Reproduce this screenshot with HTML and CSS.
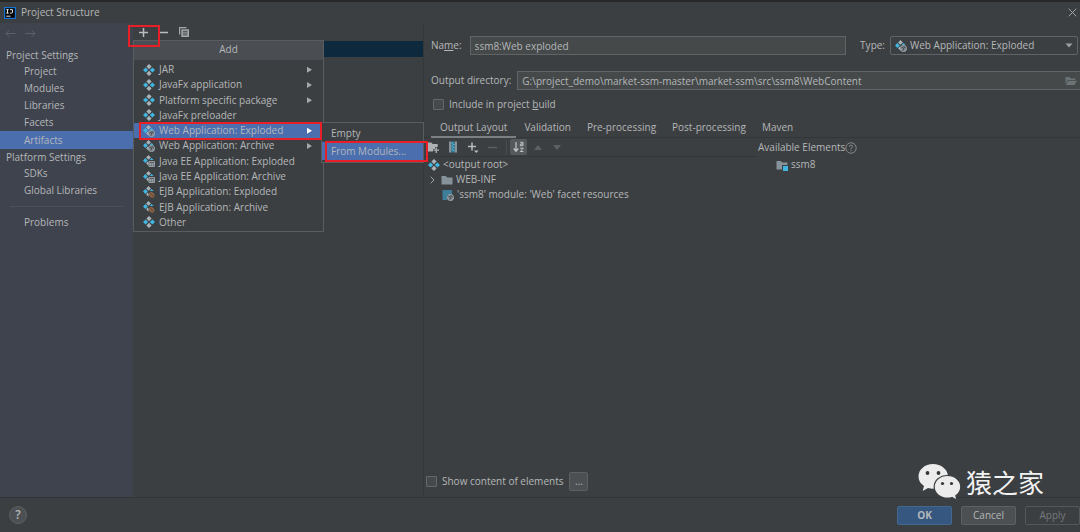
FILE: index.html
```html
<!DOCTYPE html>
<html lang="en">
<head>
<meta charset="utf-8">
<title>Project Structure</title>
<link rel="stylesheet" href="styles.css">
</head>
<body>
<svg class="defs" width="0" height="0" aria-hidden="true">
  <defs>
    <symbol id="artifact" viewBox="0 0 12 12">
      <path fill="#a9b3ba" d="M6 0l2.6 2.6L6 5.2 3.4 2.6zM6 6.8l2.6 2.6L6 12 3.4 9.4z"/>
      <path fill="#40b6e0" d="M2.6 3.4L5.2 6 2.6 8.6 0 6zM9.4 3.4L12 6 9.4 8.6 6.8 6z"/>
    </symbol>
    <symbol id="part" viewBox="0 0 12 12">
      <path fill="#a9b3ba" d="M5.5 0l2.4 2.4-2.4 2.4-2.4-2.4zM4.6 6.6l1 1v3.2L3.2 8.4z"/>
      <path fill="#40b6e0" d="M2.4 3.1l2.4 2.4-2.4 2.4L0 5.500zM8.600 3.100l2 2H6.600z"/>
    </symbol>
    <symbol id="globe" viewBox="0 0 12 12">
      <circle cx="8.500" cy="8.500" r="3.100" fill="#7d878d" stroke="#a9b3ba" stroke-width=".8"/>
      <path d="M6.300 7.200l2 .5.3 1.300-1 1.700M8.900 6l.5 1.300 1.500.5" fill="none" stroke="#3c3f41" stroke-width=".8"/>
    </symbol>
    <symbol id="web" viewBox="0 0 12 12"><use href="#part"/><use href="#globe"/></symbol>
    <symbol id="ee" viewBox="0 0 12 12"><use href="#part"/>
      <path d="M6 6.500h5.500v5H6zM6 8.200h5.500M7.800 8v3.500M9.700 8v3.500M6 9.900h5.500" fill="#3c3f41" stroke="#a9b3ba" stroke-width=".8"/>
    </symbol>
    <symbol id="ejb" viewBox="0 0 12 12"><use href="#part"/>
      <ellipse cx="8.700" cy="8.800" rx="2.400" ry="3.300" transform="rotate(-40 8.700 8.800)" fill="#8a6347"/>
      <path d="M6.700 6.500l1.900 2.100.5.4 1.700 2.200" stroke="#4c3a2e" stroke-width=".7" fill="none"/>
    </symbol>
    <symbol id="folder" viewBox="0 0 12 12"><path fill="#87939a" d="M.5 2h4.300l1.400 1.600h5.300V10.500H.5z"/></symbol>
  </defs>
</svg>
<div class="window">
  <div class="backdrop"></div>
  <header class="titlebar">
    <svg class="logo" viewBox="0 0 12 12"><rect width="12" height="12" fill="#1673d4"/><rect x="1.200" y="1.200" width="9.600" height="9.600" fill="#050505"/><path d="M2.300 2.700h2.400M3.500 2.700v3.400M2.300 6.100h2.400M6 2.700h2.500v2.400q0 1-1.100 1H6M2.300 9.200h4.200" stroke="#fff" stroke-width=".9" fill="none"/></svg>
    <h1 class="title">Project Structure</h1>
    <button class="icon-btn close" aria-label="Close"><svg width="9" height="9" viewBox="0 0 9 9"><path d="M.7.7l7.600 7.600M8.300.7L.7 8.300" stroke="#a2a5a7"/></svg></button>
  </header>

  <main class="main">
    <nav class="sidebar">
      <div class="history">
        <button class="icon-btn" aria-label="Back"><svg width="11" height="9" viewBox="0 0 11 9"><path d="M10.500 4.500H1M4.500 1L1 4.500 4.500 8" fill="none" stroke="#5d6064"/></svg></button>
        <button class="icon-btn" aria-label="Forward"><svg width="11" height="9" viewBox="0 0 11 9"><path d="M.5 4.500H10M6.500 1L10 4.500 6.500 8" fill="none" stroke="#5d6064"/></svg></button>
      </div>
      <h2 class="group">Project Settings</h2>
      <ul class="nav-list">
        <li><a href="#project">Project</a></li>
        <li><a href="#modules">Modules</a></li>
        <li><a href="#libraries">Libraries</a></li>
        <li><a href="#facets">Facets</a></li>
        <li><a class="current" href="#artifacts" aria-current="page">Artifacts</a></li>
      </ul>
      <h2 class="group">Platform Settings</h2>
      <ul class="nav-list">
        <li><a href="#sdks">SDKs</a></li>
        <li><a href="#global">Global Libraries</a></li>
      </ul>
      <hr class="rule">
      <ul class="nav-list">
        <li><a href="#problems">Problems</a></li>
      </ul>
    </nav>

    <section class="artifacts">
      <div class="list-tools">
        <button class="icon-btn" aria-label="Add"><svg width="9" height="9" viewBox="0 0 9 9"><path d="M4.500 0v9M0 4.500h9" stroke="#b9bcbe" stroke-width="1.500"/></svg></button>
        <button class="icon-btn" aria-label="Remove"><svg width="9" height="9" viewBox="0 0 9 9"><path d="M0 4.500h9" stroke="#b9bcbe" stroke-width="1.500"/></svg></button>
        <button class="icon-btn" aria-label="Copy"><svg width="10" height="10" viewBox="0 0 10 10"><path d="M.6 7.500V.6h6.900" fill="none" stroke="#a5a9ab" stroke-width="1.200"/><path fill="#a5a9ab" d="M2.300 2.300H10V10H2.300z"/><path d="M3.800 4.300h4.700M3.800 6.100h4.700M3.800 7.900h4.700" stroke="#3c3f41" stroke-width=".9"/></svg></button>
      </div>
      <div class="selected-row"></div>

      <div class="popup add-menu">
        <div class="popup-title">Add</div>
        <div class="menu" role="menu">
          <button class="item more" role="menuitem"><svg class="ic"><use href="#artifact"/></svg>JAR</button>
          <button class="item more" role="menuitem"><svg class="ic"><use href="#artifact"/></svg>JavaFx application</button>
          <button class="item more" role="menuitem"><svg class="ic"><use href="#artifact"/></svg>Platform specific package</button>
          <button class="item" role="menuitem"><svg class="ic"><use href="#artifact"/></svg>JavaFx preloader</button>
          <button class="item more active" role="menuitem"><svg class="ic"><use href="#web"/></svg>Web Application: Exploded</button>
          <button class="item more" role="menuitem"><svg class="ic"><use href="#web"/></svg>Web Application: Archive</button>
          <button class="item" role="menuitem"><svg class="ic"><use href="#ee"/></svg>Java EE Application: Exploded</button>
          <button class="item" role="menuitem"><svg class="ic"><use href="#ee"/></svg>Java EE Application: Archive</button>
          <button class="item" role="menuitem"><svg class="ic"><use href="#ejb"/></svg>EJB Application: Exploded</button>
          <button class="item" role="menuitem"><svg class="ic"><use href="#ejb"/></svg>EJB Application: Archive</button>
          <button class="item" role="menuitem"><svg class="ic"><use href="#artifact"/></svg>Other</button>
        </div>
      </div>
      <div class="popup submenu" role="menu">
        <button class="item" role="menuitem">Empty</button>
        <button class="item active" role="menuitem">From Modules...</button>
      </div>
      <div class="mark mark-add"></div>
      <div class="mark mark-web"></div>
      <div class="mark mark-modules"></div>
    </section>

    <section class="editor">
      <div class="row name-row">
        <label for="name">Na<u>m</u>e:</label>
        <input class="field" id="name" type="text" value="ssm8:Web exploded">
        <label class="type-label" for="type">Type:</label>
        <div class="combo">
          <svg class="ic"><use href="#web"/></svg>
          <select id="type"><option>Web Application: Exploded</option></select>
          <svg class="caret" viewBox="0 0 8 5"><path fill="#9da0a2" d="M.5.5h7L4 4.500z"/></svg>
        </div>
      </div>
      <div class="row dir-row">
        <label for="dir">Output directory:</label>
        <div class="browse">
          <input class="field" id="dir" type="text" value="G:\project_demo\market-ssm-master\market-ssm\src\ssm8\WebContent">
          <button class="icon-btn" aria-label="Browse"><svg width="12" height="10" viewBox="0 0 12 10"><path fill="#6c7376" d="M.5 1h4l1.300 1.500h4.500V4H2.800L.5 8zM3 4.800h8.800L9.600 9H.8z"/></svg></button>
        </div>
      </div>
      <label class="check include"><input type="checkbox"><span>Include in project <u>b</u>uild</span></label>

      <div class="tabs" role="tablist">
        <button class="tab on" role="tab" aria-selected="true">Output Layout</button>
        <button class="tab" role="tab">Validation</button>
        <button class="tab" role="tab">Pre-processing</button>
        <button class="tab" role="tab">Post-processing</button>
        <button class="tab" role="tab">Maven</button>
      </div>

      <div class="layout">
        <div class="output">
          <div class="tools">
            <button class="icon-btn" aria-label="New folder"><svg width="12" height="12" viewBox="0 0 12 12"><path fill="#aeb1b3" d="M0 1.500h4.300l1.400 1.600h5V6H8v2H6v2.500H0z"/><path d="M9.200 6.500V12M6.500 9.200H12" stroke="#aeb1b3" stroke-width="1.300"/></svg></button>
            <button class="icon-btn" aria-label="New archive"><svg width="10" height="12" viewBox="0 0 10 12"><path fill="#87939a" d="M1 .5h2.500v11H1zM6.500.5H9v11H6.500z"/><path fill="#327f9c" d="M3.500.5h3v11h-3z"/><path d="M3.500 2h1.500M5 3.500h1.500M3.500 5h1.500M5 6.500h1.500M3.500 8h1.500M5 9.500h1.500" stroke="#62bad8"/></svg></button>
            <button class="icon-btn" aria-label="Add copy of"><svg width="12" height="12" viewBox="0 0 12 12"><path d="M5 1.500v8M1 5.500h8" stroke="#b9bcbe" stroke-width="1.500"/><path fill="#b9bcbe" d="M7 9.500h4.500L9.300 12z"/></svg></button>
            <button class="icon-btn" aria-label="Remove"><svg width="9" height="9" viewBox="0 0 9 9"><path d="M0 4.500h9" stroke="#5e6163" stroke-width="1.300"/></svg></button>
            <span class="divider"></span>
            <button class="icon-btn sort" aria-label="Sort by name"><svg width="12" height="12" viewBox="0 0 12 12"><path d="M3 1v9M.7 7.500L3 10.200l2.300-2.700" stroke="#c3c6c8" stroke-width="1.200" fill="none"/><path d="M7.300 1.400H10v3.300H7.400V3H10M7.200 7.200h3L7.400 10.500h3" stroke="#c3c6c8" fill="none"/></svg></button>
            <button class="icon-btn" aria-label="Move up"><svg width="8" height="5" viewBox="0 0 8 5"><path fill="#5e6163" d="M0 5h8L4 0z"/></svg></button>
            <button class="icon-btn down" aria-label="Move down"><svg width="8" height="5" viewBox="0 0 8 5"><path fill="#5e6163" d="M0 0h8L4 5z"/></svg></button>
          </div>
          <ul class="tree">
            <li><svg class="ic"><use href="#artifact"/></svg>&lt;output root&gt;</li>
            <li><svg class="chevron" viewBox="0 0 5 8"><path d="M.7.7L4 4 .7 7.300" fill="none" stroke="#a0a3a5"/></svg><svg class="ic"><use href="#folder"/></svg>WEB-INF</li>
            <li class="leaf"><svg class="ic" viewBox="0 0 12 12"><path fill="#3d7f9b" d="M.5 1h9.500v4.500L5 6.500V11H.5z"/><use href="#globe"/></svg>'ssm8' module: 'Web' facet resources</li>
          </ul>
          <div class="show">
            <label class="check"><input type="checkbox"><span>Show content of elements</span></label>
            <button class="btn dots" aria-label="Configure">...</button>
          </div>
        </div>
        <div class="available">
          <div class="available-title">Available Elements<svg width="12" height="12" viewBox="0 0 12 12"><circle cx="6" cy="6" r="5.200" fill="none" stroke="#8b8e90" stroke-width=".9"/><path d="M4.400 4.700q0-1.600 1.600-1.600t1.600 1.400Q7.600 5.400 6 6.300V7.300M6 8.200v1" fill="none" stroke="#8b8e90"/></svg></div>
          <ul class="tree"><li class="leaf"><svg class="ic" viewBox="0 0 12 12"><use href="#folder"/><path fill="#3c3f41" d="M6 6h6v6H6z"/><path fill="#40b6e0" d="M7 7h5v5H7z"/></svg>ssm8</li></ul>
        </div>
      </div>
    </section>
  </main>

  <footer class="footer">
    <button class="help" aria-label="Help">?</button>
    <div class="actions">
      <button class="btn primary">OK</button>
      <button class="btn">Cancel</button>
      <button class="btn" disabled>Apply</button>
    </div>
  </footer>

  <div class="watermark">
    <svg width="44" height="38" viewBox="0 0 44 38"><path fill="#ececec" d="M15 1C6.800 1 .5 6.500.5 13.500c0 4 2 7.200 5.500 9.500l-1.300 5 5.300-3q2.300.7 5.300.7C23 25.500 30 20.500 30 13.500S23.200 1 15 1z"/><path fill="#ececec" stroke="#3c3f41" stroke-width="1.200" d="M29.500 12.500c-7.500 0-13.300 4.800-13.300 11.300s5.800 11.400 13.300 11.400q2.300 0 4.500-.7l5 2.700-1.200-4.500c3.300-2.200 5-5.200 5-8.900 0-6.500-6-11.300-13.300-11.300z"/><g fill="#34373a"><circle cx="9.500" cy="10" r="1.900"/><circle cx="20.500" cy="10" r="1.900"/><circle cx="24.500" cy="20.500" r="1.600"/><circle cx="33.500" cy="20.500" r="1.600"/></g></svg>
    <span>猿之家</span>
  </div>
</div>
</body>
</html>
```

FILE: styles.css
```css
* { box-sizing: border-box; }

body {
  margin: 0;
  background: #3c3f41;
  color: #b4b7b9;
  font: 10px/15px "Open Sans", "Noto Sans CJK SC", sans-serif;
}

button, input, select { font: inherit; color: inherit; }
button { padding: 0; border: 0; background: none; white-space: nowrap; }
h1, h2, ul { margin: 0; padding: 0; font: inherit; list-style: none; }
svg { display: block; flex: none; }
label { white-space: nowrap; }
.defs { position: absolute; }
.ic { width: 12px; height: 12px; }
.icon-btn { display: grid; place-items: center; flex: none; }

.window { position: relative; display: flex; flex-direction: column; min-height: 100vh; }
.backdrop { height: 2px; background: #282828; }

.titlebar { display: flex; align-items: center; gap: 5px; height: 21px; padding: 0 3px 0 4px; }
.logo { width: 12px; height: 12px; }
.title { flex: 1; }

.main { flex: 1; display: flex; }

.sidebar { width: 133px; flex: none; background: #3f434d; }
.history { display: flex; align-items: center; gap: 9px; height: 24px; padding: 0 5px 3px; }
.group { height: 16px; padding-left: 6px; line-height: 16px; }
.nav-list a {
  display: block;
  height: 17px;
  padding-left: 24px;
  color: inherit;
  line-height: 17px;
  text-decoration: none;
}
.nav-list .current { background: #4b6eaf; height: 18px; line-height: 18px; }
.rule { height: 1px; margin: 7px 10px; border: 0; background: #4b4f57; }

.artifacts { position: relative; width: 291px; flex: none; border-right: 1px solid #343739; }
.list-tools { display: flex; align-items: center; gap: 11px; height: 18px; padding-left: 6px; }
.selected-row { height: 16px; background: #0d293e; }

.popup { position: absolute; z-index: 1; border: 1px solid #5a5d5f; background: #3c3f41; }
.popup-title { height: 19px; background: #4a4d51; line-height: 17px; text-align: center; }
.add-menu { left: 0; top: 17px; width: 191px; }
.menu { display: grid; grid-auto-rows: 1fr; height: 171px; padding: 2px 0 1px; }
.item { position: relative; display: flex; align-items: center; gap: 4px; width: 100%; padding-left: 9px; text-align: left; }
.item.active { background: #4b6eaf; }
.item.more::after {
  content: "";
  width: 5px;
  height: 6px;
  margin: 0 11px 0 auto;
  background: #a5a8aa;
  clip-path: polygon(0 0, 100% 50%, 0 100%);
}
.item.more.active::after { background: #fff; }
.submenu { left: 188px; top: 99px; width: 103px; padding: 1px 0 2px; }
.submenu .item { height: 18px; }

.mark { position: absolute; z-index: 2; border: 2px solid #e81f27; pointer-events: none; }
.mark-add { left: -5px; top: 2px; width: 32px; height: 22px; }
.mark-web { left: 6px; top: 99px; width: 183px; height: 18px; }
.mark-modules { left: 192px; top: 118px; width: 103px; height: 21px; }

.editor { flex: 1; min-width: 0; display: flex; flex-direction: column; }
.row { display: flex; align-items: center; height: 19px; padding-left: 7px; }
.name-row { margin-top: 13px; padding-right: 2px; }
.name-row .field { flex: 1; margin-left: 8px; }
.dir-row { margin-top: 16px; }
.field { min-width: 0; height: 19px; padding: 0 4px; border: 1px solid #616466; background: #45494a; outline: 0; }
.type-label { margin-left: 14px; }
.combo, .browse { position: relative; }
.combo { width: 188px; margin-left: 5px; }
.combo select {
  display: block;
  appearance: none;
  width: 100%;
  height: 19px;
  padding: 0 20px 0 19px;
  border: 1px solid #616466;
  border-radius: 2px;
  background: #3c3f41;
}
.combo .ic { position: absolute; left: 5px; top: 4px; }
.combo .caret { position: absolute; right: 5px; top: 7px; width: 8px; height: 5px; }
.browse { flex: 1; margin-left: 6px; }
.browse .field { display: block; width: 100%; padding-right: 20px; border-right: 0; }
.browse .icon-btn { position: absolute; right: 3px; top: 5px; }

.check { display: flex; align-items: center; gap: 5px; }
.check input {
  appearance: none;
  width: 11px;
  height: 11px;
  margin: 0;
  border: 1px solid #65686a;
  border-radius: 1px;
  background: #45494a;
}
.include { margin: 7px 0 0 9px; }

.tabs { display: flex; height: 19px; margin-top: 7px; padding-left: 7px; border-bottom: 1px solid #34373a; }
.tab { height: 19px; padding: 0 8px 2px; }
.tab.on { padding: 0 9px; border-bottom: 2px solid #7b8085; }

.layout { flex: 1; display: flex; }
.output { width: 333px; display: flex; flex-direction: column; }
.tools { display: flex; align-items: center; gap: 9px; height: 19px; padding-left: 3px; border-bottom: 1px solid #343739; }
.divider { width: 1px; height: 15px; background: #4a4d4f; }
.sort { width: 17px; height: 16px; margin-left: -6px; border-radius: 2px; background: #55595b; }
.down { margin-left: 2px; }
.sort + .icon-btn { margin-left: -2px; }
.tree li { display: flex; align-items: center; gap: 3px; height: 15px; padding-left: 4px; }
.tree .leaf { padding-left: 18px; }
.chevron { width: 5px; height: 8px; margin: 0 3px 0 2px; }
.show { display: flex; align-items: center; gap: 6px; margin-top: auto; padding: 0 0 6px 2px; }
.available { flex: 1; padding-left: 1px; }
.available-title { display: flex; align-items: center; height: 19px; }

.footer { display: flex; align-items: center; height: 35px; padding: 0 0 0 9px; border-top: 1px solid #323537; }
.help { width: 18px; height: 18px; border: 1px solid #5d6062; border-radius: 50%; background: #4c5052; font-size: 12px; font-weight: 600; line-height: 16px; }
.actions { display: flex; gap: 9px; margin-left: auto; }
.btn { width: 55px; height: 19px; border: 1px solid #5e6163; border-radius: 2px; background: #4c5052; line-height: 17px; }
.btn:disabled { background: none; color: #76797b; border-color: #55585a; }
.btn.primary { background: #365880; border-color: #43688f; font-weight: 700; }
.btn.dots { width: 19px; }

.watermark {
  position: absolute;
  right: 36px;
  bottom: 31px;
  display: flex;
  align-items: center;
  gap: 4px;
  color: #f2f2f2;
  font: 26px/38px "Noto Sans CJK SC", sans-serif;
}
```
